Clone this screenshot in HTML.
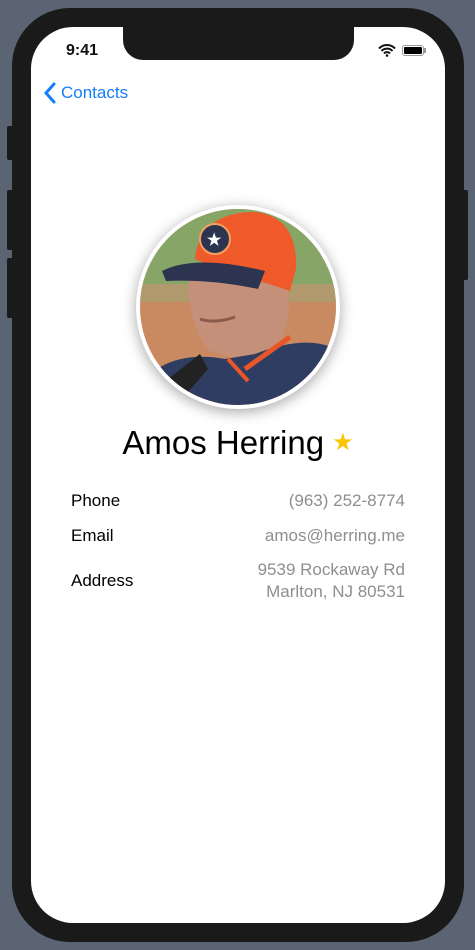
<!DOCTYPE html>
<html><head><meta charset="utf-8"><style>
*{margin:0;padding:0;box-sizing:border-box}
body{width:475px;height:950px;background:#5a6472;position:relative;overflow:hidden;font-family:"Liberation Sans",sans-serif}
.frame{position:absolute;left:12px;top:8px;width:452px;height:934px;background:#1a1a1a;border-radius:58px}
.screen{position:absolute;left:31px;top:27px;width:414px;height:896px;background:#fff;border-radius:42px;overflow:hidden}
.notch{position:absolute;left:92px;top:0;width:231px;height:33px;background:#1a1a1a;border-radius:0 0 20px 20px}
.btn{position:absolute;background:#1a1a1a;border-radius:2px}
.abs{position:absolute}
.lbl{position:absolute;left:40px;font-size:17px;color:#000}
.val{position:absolute;right:40px;font-size:17px;color:#8e8e93;text-align:right;line-height:22px}
</style></head><body>
<div class="btn" style="left:7px;top:126px;width:6px;height:34px"></div>
<div class="btn" style="left:7px;top:190px;width:6px;height:60px"></div>
<div class="btn" style="left:7px;top:258px;width:6px;height:60px"></div>
<div class="btn" style="left:462px;top:190px;width:6px;height:90px"></div>
<div class="frame"></div>
<div class="screen">
 <div class="notch"></div>
 <div class="abs" style="left:35px;top:15px;font-size:16px;font-weight:bold;color:#111">9:41</div>
 <svg class="abs" style="left:347px;top:17px" width="18" height="13" viewBox="0 0 18 13"><path d="M1 4.5a11 11 0 0 1 16 0M3.5 7a7.5 7.5 0 0 1 11 0M6 9.5a4 4 0 0 1 6 0" stroke="#111" stroke-width="2" fill="none"/><circle cx="9" cy="11.5" r="1.3" fill="#111"/></svg>
 <div class="abs" style="left:371px;top:18px;width:22px;height:11px;border:1px solid #999;border-radius:3px;padding:1px"><div style="background:#000;width:100%;height:100%;border-radius:1px"></div></div>
 <div class="abs" style="left:393px;top:21px;width:2px;height:5px;background:#999"></div>
 <svg class="abs" style="left:12px;top:55px" width="14" height="22" viewBox="0 0 14 22"><path d="M11 2L3 11l8 9" stroke="#147efb" stroke-width="3" fill="none" stroke-linecap="round"/></svg>
 <div class="abs" style="left:30px;top:56px;font-size:17px;color:#147efb">Contacts</div>
 <div class="abs" style="left:105px;top:178px;width:204px;height:204px;border-radius:50%;background:#fff;box-shadow:0 3px 14px rgba(0,0,0,.35);overflow:hidden;border:4px solid #fff">
  <svg width="196" height="196" viewBox="0 0 196 196">
   <rect width="196" height="196" fill="#c98a62"/>
   <rect width="196" height="85" fill="#86a566"/>
   <rect y="75" width="196" height="18" fill="#b0996c"/>
   <path d="M140 150 L150 195 L60 196 Z" fill="#a06a58"/>
   <path d="M48 75 Q55 55 100 60 L145 70 Q155 100 140 135 Q120 150 90 148 L70 142 Q50 120 48 75Z" fill="#c4907a"/>
   <path d="M60 110 Q75 115 95 108" stroke="#8a5a4a" stroke-width="3" fill="none"/>
   <path d="M0 175 Q30 140 85 150 L115 145 Q165 125 196 140 L196 196 L0 196Z" fill="#2f3d62"/>
   <path d="M105 160 L150 128" stroke="#e8562a" stroke-width="5"/>
   <path d="M88 150 L108 172" stroke="#e8562a" stroke-width="4"/>
   <path d="M28 170 L60 145 L68 160 L42 190Z" fill="#222"/>
   <path d="M55 50 Q60 3 115 3 Q158 8 156 60 L150 82 Q115 70 78 60Z" fill="#f05a2a"/>
   <path d="M22 62 Q55 45 125 62 L118 80 Q70 70 26 72Z" fill="#2c3450"/>
   <circle cx="75" cy="30" r="15" fill="#2c3450" stroke="#f5a060" stroke-width="2"/>
   <text x="67" y="36" font-size="16" fill="#fff" font-weight="bold">★</text>
  </svg>
 </div>
 <div class="abs" style="left:0;width:414px;top:397px;text-align:center;font-size:33px;color:#000;white-space:nowrap"><span>Amos Herring</span><span style="color:#f7c600;font-size:24px;margin-left:8px;vertical-align:4px">★</span></div>
 <div class="lbl" style="top:464px">Phone</div><div class="val" style="top:463px">(963) 252-8774</div>
 <div class="lbl" style="top:499px">Email</div><div class="val" style="top:498px">amos@herring.me</div>
 <div class="lbl" style="top:544px">Address</div><div class="val" style="top:532px">9539 Rockaway Rd<br>Marlton, NJ 80531</div>
</div>
</body></html>
